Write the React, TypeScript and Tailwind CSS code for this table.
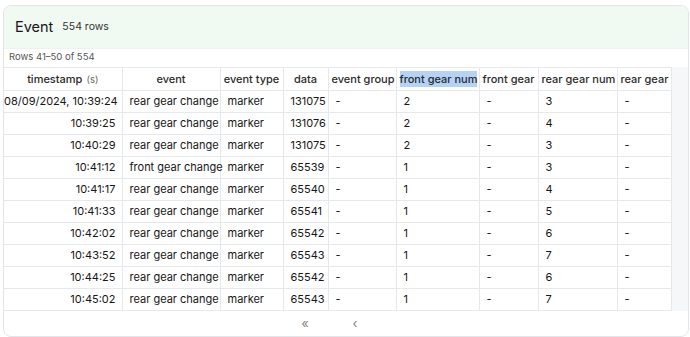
import React from 'react';

const columns = [
  { key: 'timestamp', label: 'timestamp', width: 118 },
  { key: 'event', label: 'event', width: 98 },
  { key: 'type', label: 'event type', width: 63 },
  { key: 'data', label: 'data', width: 45 },
  { key: 'group', label: 'event group', width: 68 },
  { key: 'fgn', label: 'front gear num', width: 83 },
  { key: 'fg', label: 'front gear', width: 59 },
  { key: 'rgn', label: 'rear gear num', width: 79 },
  { key: 'rg', label: 'rear gear', width: 54 },
];

const rows = [
  ['08/09/2024, 10:39:24', 'rear gear change', 'marker', '131075', '-', '2', '-', '3', '-'],
  ['10:39:25', 'rear gear change', 'marker', '131076', '-', '2', '-', '4', '-'],
  ['10:40:29', 'rear gear change', 'marker', '131075', '-', '2', '-', '3', '-'],
  ['10:41:12', 'front gear change', 'marker', '65539', '-', '1', '-', '3', '-'],
  ['10:41:17', 'rear gear change', 'marker', '65540', '-', '1', '-', '4', '-'],
  ['10:41:33', 'rear gear change', 'marker', '65541', '-', '1', '-', '5', '-'],
  ['10:42:02', 'rear gear change', 'marker', '65542', '-', '1', '-', '6', '-'],
  ['10:43:52', 'rear gear change', 'marker', '65543', '-', '1', '-', '7', '-'],
  ['10:44:25', 'rear gear change', 'marker', '65542', '-', '1', '-', '6', '-'],
  ['10:45:02', 'rear gear change', 'marker', '65543', '-', '1', '-', '7', '-'],
];

export default function App() {
  return (
    <div className="bg-white pl-[3px] pr-[1px] pt-[5px] font-['Inter',sans-serif] text-[#161616]">
      <div className="h-[332px] overflow-hidden rounded-lg border border-[#e3e5e8]">
        {/* Title bar */}
        <div className="flex h-[42px] items-center gap-[9px] bg-[#f0f9f2] pl-[11px]">
          <span className="text-[14.5px] leading-none">Event</span>
          <span className="text-[10.5px] leading-none text-[#333]">554 rows</span>
        </div>

        {/* Range */}
        <div className="flex h-[19px] items-center border-t border-[#eef0f2] pb-[1px] pl-[5px] text-[9.5px] text-[#555]">Rows 41–50 of 554</div>

        {/* Table */}
        <div className="bg-[#f6f7f9]">
          <table className="table-fixed border-collapse bg-white text-[11px]" style={{ width: 667 }}>
            <colgroup>
              {columns.map((c) => (
                <col key={c.key} style={{ width: c.width }} />
              ))}
            </colgroup>
            <thead>
              <tr className="h-[23px]">
                {columns.map((c, i) => (
                  <th
                    key={c.key}
                    className={`border border-[#e6e8eb] px-[3px] text-center font-medium whitespace-nowrap text-[#2a2a2a] ${i === 0 ? 'border-l-0' : ''}`}
                  >
                    {c.key === 'fgn' ? (
                      <span className="bg-[#b4d3f7] py-[1px]">{c.label}</span>
                    ) : (
                      c.label
                    )}
                    {c.key === 'timestamp' && <span className="ml-[4px] text-[9.5px] font-normal text-[#666]">(s)</span>}
                  </th>
                ))}
              </tr>
            </thead>
            <tbody>
              {rows.map((r, ri) => (
                <tr key={ri} className="h-[22px]">
                  {r.map((v, ci) => (
                    <td
                      key={ci}
                      className={`border border-[#e6e8eb] whitespace-nowrap ${
                        ci === 0 ? 'border-l-0 pr-[6px] text-right' : 'pl-[7px] text-left'
                      }`}
                    >
                      {v}
                    </td>
                  ))}
                </tr>
              ))}
            </tbody>
          </table>
        </div>

        {/* Pagination */}
        <div className="flex h-[26px] items-center pl-[294px] text-[13px] text-[#888]">
          <button type="button" className="w-[14px] text-center">«</button>
          <button type="button" className="ml-[36px] w-[14px] text-center">‹</button>
        </div>
      </div>
    </div>
  );
}
